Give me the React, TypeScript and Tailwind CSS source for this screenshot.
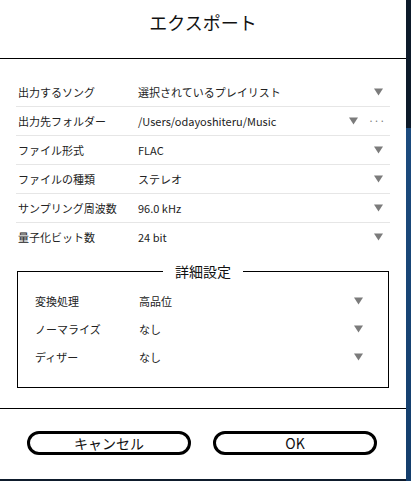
const font = 'font-["Noto_Sans_CJK_JP","Noto_Sans",sans-serif]';

function Caret() {
  return (
    <svg width="9" height="8" viewBox="0 0 9 8" aria-hidden="true">
      <path d="M0 0.5 H9 L4.5 7.5 Z" fill="#7b7b7b" />
    </svg>
  );
}

type RowProps = {
  label: string;
  value: string;
  more?: boolean;
  last?: boolean;
};

function SettingRow({ label, value, more, last }: RowProps) {
  return (
    <div
      className={`flex h-[28px] items-center ${last ? "" : "border-b border-[#e6e6e6]"} box-content`}
    >
      <span className="w-[122px] pl-[2px] text-[11px] text-[#222]">{label}</span>
      <span className="flex-1 text-[11px] text-[#222]">{value}</span>
      {more ? (
        <div className="flex items-center gap-[10px] pr-[5px]">
          <Caret />
          <span className="text-[10px] leading-none text-[#777]">···</span>
        </div>
      ) : (
        <div className="pr-[7px]">
          <Caret />
        </div>
      )}
    </div>
  );
}

function DetailRow({ label, value }: { label: string; value: string }) {
  return (
    <div className="flex h-[28px] items-center">
      <span className="w-[104px] text-[11px] text-[#222]">{label}</span>
      <span className="flex-1 text-[11px] text-[#222]">{value}</span>
      <div className="pr-[25px]">
        <Caret />
      </div>
    </div>
  );
}

export default function App() {
  return (
    <div className={`flex h-[481px] w-[411px] bg-[#0e1b2c] ${font}`}>
      <div className="flex h-[479px] w-[406px] flex-col bg-white">
        <div className="flex h-[59px] shrink-0 justify-center border-b border-black pt-[9px]">
          <h1 className="text-[18px] leading-[26px] text-[#111]">エクスポート</h1>
        </div>

        <div className="mx-[16px] mt-[19px]">
          <SettingRow label="出力するソング" value="選択されているプレイリスト" />
          <SettingRow label="出力先フォルダー" value="/Users/odayoshiteru/Music" more />
          <SettingRow label="ファイル形式" value="FLAC" />
          <SettingRow label="ファイルの種類" value="ステレオ" />
          <SettingRow label="サンプリング周波数" value="96.0 kHz" />
          <SettingRow label="量子化ビット数" value="24 bit" last />
        </div>

        <div className="relative mx-[17px] mt-[20px] border border-black pb-[16px] pl-[17px] pt-[15px]">
          <span className="absolute left-1/2 top-[-11px] -translate-x-1/2 bg-white px-[12px] text-[14px] text-[#111]">
            詳細設定
          </span>
          <DetailRow label="変換処理" value="高品位" />
          <DetailRow label="ノーマライズ" value="なし" />
          <DetailRow label="ディザー" value="なし" />
        </div>

        <div className="mt-[20px] border-t border-black" />

        <div className="flex gap-[22px] pl-[27px] pt-[22px]">
          <button className="h-[24px] w-[164px] rounded-full border-[3px] border-black text-[14px] leading-none text-[#111]">
            キャンセル
          </button>
          <button className="h-[24px] w-[164px] rounded-full border-[3px] border-black text-[14px] leading-none text-[#111]">
            OK
          </button>
        </div>
      </div>
      <div className="flex flex-1 flex-col">
        <div className="h-[128px] bg-[#0d1a2a]" />
        <div className="flex-1 bg-gradient-to-b from-[#1c4b7e] to-[#143e6c]" />
      </div>
    </div>
  );
}
